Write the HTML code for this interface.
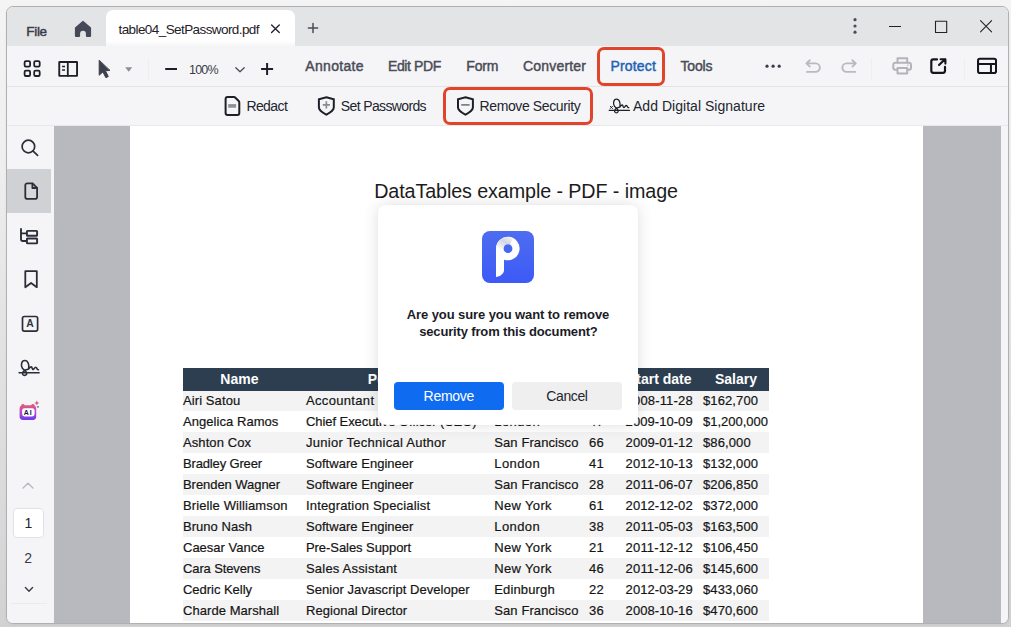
<!DOCTYPE html>
<html lang="en">
<head>
<meta charset="utf-8">
<title>PDF Editor - Remove Security</title>
<style>
*{box-sizing:border-box;margin:0;padding:0}
html,body{width:1011px;height:627px;overflow:hidden;background:linear-gradient(#f4f4f4 0,#efefef 25%,#e4e4e4 50%,#dadada 80%,#d2d2d2 100%);font-family:"Liberation Sans",sans-serif;color:#2b2d36}
.abs{position:absolute}
#shadow{position:absolute;left:6px;top:6px;width:1003px;height:618px;border-radius:7px;box-shadow:0 1px 3px rgba(0,0,0,.05)}
#win{position:absolute;left:6px;top:6px;width:1003px;height:618px;border:1px solid #b0b0b0;border-radius:7px;overflow:hidden;background:#f5f5f7}
#inner{position:absolute;left:-7px;top:-7px;width:1011px;height:627px}
#titlebar{left:7px;top:7px;width:1001px;height:39px;background:#e3e4e6}
#tab{left:106px;top:10px;width:189px;height:36px;background:linear-gradient(#fff 0,#fff 85%,#f6f6f8 100%);border-radius:7px 7px 0 0}
.t{position:absolute;white-space:nowrap;line-height:1}
#row1{left:7px;top:46px;width:1001px;height:41px;background:#f5f5f7;border-bottom:1px solid #e3e3e7}
#row2{left:7px;top:87px;width:1001px;height:39px;background:#f5f5f7;border-bottom:1px solid #e8e8eb}
#side{left:7px;top:126px;width:47px;height:497px;background:#f5f5f7}
#sidesel{left:7px;top:169px;width:44px;height:44px;background:#d0d1d4}
#gray{left:54px;top:126px;width:947px;height:497px;background:#b7b9be}
#page{left:130px;top:126px;width:793px;height:497px;background:#fff}
#rstrip{left:1001px;top:126px;width:7px;height:497px;background:#f5f5f7}
.redbox{position:absolute;border:3.6px solid #e0442a;border-radius:7px}
#icons{position:absolute;left:0;top:0;width:1011px;height:627px;overflow:visible}
.vsep{position:absolute;width:1px;background:#eeeef1}
#pgbox{left:13px;top:508px;width:31px;height:30px;background:#fff;border:1px solid #e2e2e6;border-radius:4px}
.dt{-webkit-text-stroke:0.2px}
.hdr{position:absolute;background:#2c3e50}
.stripe{position:absolute;left:183px;width:586px;background:#f3f3f3}
#dlg{position:absolute;left:378px;top:205px;width:260px;height:219.6px;background:linear-gradient(#fff 0,#fff 99.3%,rgba(255,255,255,.8) 100%);border-radius:8px;box-shadow:0 0 16px rgba(0,0,0,.13),0 0 2px rgba(0,0,0,.04)}
#appicon{position:absolute;left:104px;top:26px;width:52px;height:52px}
.btn{position:absolute;top:177px;height:28px;border-radius:4px;border:0;padding:0;margin:0;font-family:inherit;display:block}
#btn-remove{left:16px;width:110px;background:#0f6cf0}
#btn-cancel{left:134px;width:110px;background:#efeff0}
</style>
</head>
<body>
<div id="shadow"></div>
<div id="win"><div id="inner">
  <div id="titlebar" class="abs"></div>
  <div id="tab" class="abs"></div>
  <div id="row1" class="abs"></div>
  <div id="row2" class="abs"></div>
  <div id="side" class="abs"></div>
  <div id="sidesel" class="abs"></div>
  <div id="gray" class="abs"></div>
  <div id="page" class="abs">
  </div>
<div class="t" style="left:374.2px;top:181.8px;font-size:19.7px;color:#1c1c1c;letter-spacing:-0.083px;">DataTables example - PDF - image</div>
<div class="stripe" style="top:390.0px;height:20.97px"></div>
<div class="t dt" style="left:183.0px;top:393.9px;font-size:13px;color:#151515;letter-spacing:0.091px;">Airi Satou</div>
<div class="t dt" style="left:306.0px;top:393.9px;font-size:13px;color:#151515;letter-spacing:0.334px;">Accountant</div>
<div class="t dt" style="left:494.3px;top:393.9px;font-size:13px;color:#151515;letter-spacing:0.779px;">Tokyo</div>
<div class="t dt" style="left:589.1px;top:393.9px;font-size:13px;color:#151515;letter-spacing:0.286px;">33</div>
<div class="t dt" style="left:625.6px;top:393.9px;font-size:13px;color:#151515;letter-spacing:0.166px;">2008-11-28</div>
<div class="t dt" style="left:703.0px;top:393.9px;font-size:13px;color:#151515;letter-spacing:0.109px;">$162,700</div>
<div class="t dt" style="left:183.0px;top:414.9px;font-size:13px;color:#151515;letter-spacing:0.054px;">Angelica Ramos</div>
<div class="t dt" style="left:306.0px;top:414.9px;font-size:13px;color:#151515;letter-spacing:-0.067px;">Chief Executive Officer (CEO)</div>
<div class="t dt" style="left:494.3px;top:414.9px;font-size:13px;color:#151515;letter-spacing:0.391px;">London</div>
<div class="t dt" style="left:589.1px;top:414.9px;font-size:13px;color:#151515;letter-spacing:0.286px;">47</div>
<div class="t dt" style="left:625.6px;top:414.9px;font-size:13px;color:#151515;letter-spacing:0.059px;">2009-10-09</div>
<div class="t dt" style="left:703.0px;top:414.9px;font-size:13px;color:#151515;letter-spacing:-0.014px;">$1,200,000</div>
<div class="stripe" style="top:431.9px;height:20.97px"></div>
<div class="t dt" style="left:183.0px;top:435.8px;font-size:13px;color:#151515;letter-spacing:0.086px;">Ashton Cox</div>
<div class="t dt" style="left:306.0px;top:435.8px;font-size:13px;color:#151515;letter-spacing:0.261px;">Junior Technical Author</div>
<div class="t dt" style="left:494.3px;top:435.8px;font-size:13px;color:#151515;letter-spacing:0.084px;">San Francisco</div>
<div class="t dt" style="left:589.1px;top:435.8px;font-size:13px;color:#151515;letter-spacing:0.286px;">66</div>
<div class="t dt" style="left:625.6px;top:435.8px;font-size:13px;color:#151515;letter-spacing:0.059px;">2009-01-12</div>
<div class="t dt" style="left:703.0px;top:435.8px;font-size:13px;color:#151515;letter-spacing:0.104px;">$86,000</div>
<div class="t dt" style="left:183.0px;top:456.8px;font-size:13px;color:#151515;letter-spacing:-0.151px;">Bradley Greer</div>
<div class="t dt" style="left:306.0px;top:456.8px;font-size:13px;color:#151515;letter-spacing:0.031px;">Software Engineer</div>
<div class="t dt" style="left:494.3px;top:456.8px;font-size:13px;color:#151515;letter-spacing:0.391px;">London</div>
<div class="t dt" style="left:589.1px;top:456.8px;font-size:13px;color:#151515;letter-spacing:0.286px;">41</div>
<div class="t dt" style="left:625.6px;top:456.8px;font-size:13px;color:#151515;letter-spacing:0.059px;">2012-10-13</div>
<div class="t dt" style="left:703.0px;top:456.8px;font-size:13px;color:#151515;letter-spacing:0.109px;">$132,000</div>
<div class="stripe" style="top:473.9px;height:20.97px"></div>
<div class="t dt" style="left:183.0px;top:477.8px;font-size:13px;color:#151515;letter-spacing:-0.056px;">Brenden Wagner</div>
<div class="t dt" style="left:306.0px;top:477.8px;font-size:13px;color:#151515;letter-spacing:0.031px;">Software Engineer</div>
<div class="t dt" style="left:494.3px;top:477.8px;font-size:13px;color:#151515;letter-spacing:0.084px;">San Francisco</div>
<div class="t dt" style="left:589.1px;top:477.8px;font-size:13px;color:#151515;letter-spacing:0.286px;">28</div>
<div class="t dt" style="left:625.6px;top:477.8px;font-size:13px;color:#151515;letter-spacing:0.166px;">2011-06-07</div>
<div class="t dt" style="left:703.0px;top:477.8px;font-size:13px;color:#151515;letter-spacing:0.109px;">$206,850</div>
<div class="t dt" style="left:183.0px;top:498.7px;font-size:13px;color:#151515;letter-spacing:0.112px;">Brielle Williamson</div>
<div class="t dt" style="left:306.0px;top:498.7px;font-size:13px;color:#151515;letter-spacing:0.159px;">Integration Specialist</div>
<div class="t dt" style="left:494.3px;top:498.7px;font-size:13px;color:#151515;letter-spacing:0.341px;">New York</div>
<div class="t dt" style="left:589.1px;top:498.7px;font-size:13px;color:#151515;letter-spacing:0.286px;">61</div>
<div class="t dt" style="left:625.6px;top:498.7px;font-size:13px;color:#151515;letter-spacing:0.059px;">2012-12-02</div>
<div class="t dt" style="left:703.0px;top:498.7px;font-size:13px;color:#151515;letter-spacing:0.109px;">$372,000</div>
<div class="stripe" style="top:515.8px;height:20.97px"></div>
<div class="t dt" style="left:183.0px;top:519.7px;font-size:13px;color:#151515;letter-spacing:0.032px;">Bruno Nash</div>
<div class="t dt" style="left:306.0px;top:519.7px;font-size:13px;color:#151515;letter-spacing:0.031px;">Software Engineer</div>
<div class="t dt" style="left:494.3px;top:519.7px;font-size:13px;color:#151515;letter-spacing:0.391px;">London</div>
<div class="t dt" style="left:589.1px;top:519.7px;font-size:13px;color:#151515;letter-spacing:0.286px;">38</div>
<div class="t dt" style="left:625.6px;top:519.7px;font-size:13px;color:#151515;letter-spacing:0.166px;">2011-05-03</div>
<div class="t dt" style="left:703.0px;top:519.7px;font-size:13px;color:#151515;letter-spacing:0.109px;">$163,500</div>
<div class="t dt" style="left:183.0px;top:540.7px;font-size:13px;color:#151515;">Caesar Vance</div>
<div class="t dt" style="left:306.0px;top:540.7px;font-size:13px;color:#151515;letter-spacing:-0.065px;">Pre-Sales Support</div>
<div class="t dt" style="left:494.3px;top:540.7px;font-size:13px;color:#151515;letter-spacing:0.341px;">New York</div>
<div class="t dt" style="left:589.1px;top:540.7px;font-size:13px;color:#151515;letter-spacing:0.286px;">21</div>
<div class="t dt" style="left:625.6px;top:540.7px;font-size:13px;color:#151515;letter-spacing:0.166px;">2011-12-12</div>
<div class="t dt" style="left:703.0px;top:540.7px;font-size:13px;color:#151515;letter-spacing:0.109px;">$106,450</div>
<div class="stripe" style="top:557.8px;height:20.97px"></div>
<div class="t dt" style="left:183.0px;top:561.7px;font-size:13px;color:#151515;letter-spacing:-0.116px;">Cara Stevens</div>
<div class="t dt" style="left:306.0px;top:561.7px;font-size:13px;color:#151515;letter-spacing:0.197px;">Sales Assistant</div>
<div class="t dt" style="left:494.3px;top:561.7px;font-size:13px;color:#151515;letter-spacing:0.341px;">New York</div>
<div class="t dt" style="left:589.1px;top:561.7px;font-size:13px;color:#151515;letter-spacing:0.286px;">46</div>
<div class="t dt" style="left:625.6px;top:561.7px;font-size:13px;color:#151515;letter-spacing:0.166px;">2011-12-06</div>
<div class="t dt" style="left:703.0px;top:561.7px;font-size:13px;color:#151515;letter-spacing:0.109px;">$145,600</div>
<div class="t dt" style="left:183.0px;top:582.6px;font-size:13px;color:#151515;letter-spacing:-0.029px;">Cedric Kelly</div>
<div class="t dt" style="left:306.0px;top:582.6px;font-size:13px;color:#151515;letter-spacing:0.037px;">Senior Javascript Developer</div>
<div class="t dt" style="left:494.3px;top:582.6px;font-size:13px;color:#151515;letter-spacing:0.134px;">Edinburgh</div>
<div class="t dt" style="left:589.1px;top:582.6px;font-size:13px;color:#151515;letter-spacing:0.286px;">22</div>
<div class="t dt" style="left:625.6px;top:582.6px;font-size:13px;color:#151515;letter-spacing:0.059px;">2012-03-29</div>
<div class="t dt" style="left:703.0px;top:582.6px;font-size:13px;color:#151515;letter-spacing:0.109px;">$433,060</div>
<div class="stripe" style="top:599.7px;height:20.97px"></div>
<div class="t dt" style="left:183.0px;top:603.6px;font-size:13px;color:#151515;letter-spacing:0.055px;">Charde Marshall</div>
<div class="t dt" style="left:306.0px;top:603.6px;font-size:13px;color:#151515;letter-spacing:0.035px;">Regional Director</div>
<div class="t dt" style="left:494.3px;top:603.6px;font-size:13px;color:#151515;letter-spacing:0.084px;">San Francisco</div>
<div class="t dt" style="left:589.1px;top:603.6px;font-size:13px;color:#151515;letter-spacing:0.286px;">36</div>
<div class="t dt" style="left:625.6px;top:603.6px;font-size:13px;color:#151515;letter-spacing:0.059px;">2008-10-16</div>
<div class="t dt" style="left:703.0px;top:603.6px;font-size:13px;color:#151515;letter-spacing:0.109px;">$470,600</div>
<div class="hdr" style="left:183px;top:368px;width:586px;height:22.7px"></div>
<div class="t" style="left:220.3px;top:371.7px;font-size:14px;color:#fff;font-weight:bold;">Name</div>
<div class="t" style="left:367.8px;top:371.7px;font-size:14px;color:#fff;font-weight:bold;">Position</div>
<div class="t" style="left:517.2px;top:371.7px;font-size:14px;color:#fff;font-weight:bold;">Office</div>
<div class="t" style="left:589.3px;top:371.7px;font-size:14px;color:#fff;font-weight:bold;">Age</div>
<div class="t" style="left:627.0px;top:371.7px;font-size:14px;color:#fff;font-weight:bold;">Start date</div>
<div class="t" style="left:715.0px;top:371.7px;font-size:14px;color:#fff;font-weight:bold;">Salary</div>
<div class="t" style="left:26.3px;top:25.1px;font-size:13.5px;color:#3a3c47;-webkit-text-stroke:0.45px;letter-spacing:-0.318px;">File</div>
<div class="t" style="left:118.5px;top:22.6px;font-size:13.5px;color:#1f2128;letter-spacing:-0.584px;">table04_SetPassword.pdf</div>
<div class="t" style="left:189.0px;top:64.4px;font-size:12.5px;color:#3a3c47;letter-spacing:-0.790px;">100%</div>
<div class="t" style="left:305.3px;top:59.2px;font-size:14px;color:#4a4c57;-webkit-text-stroke:0.45px;letter-spacing:0.322px;">Annotate</div>
<div class="t" style="left:388.0px;top:59.2px;font-size:14px;color:#4a4c57;-webkit-text-stroke:0.45px;letter-spacing:-0.402px;">Edit PDF</div>
<div class="t" style="left:466.3px;top:59.2px;font-size:14px;color:#4a4c57;-webkit-text-stroke:0.45px;letter-spacing:-0.154px;">Form</div>
<div class="t" style="left:523.0px;top:59.2px;font-size:14px;color:#4a4c57;-webkit-text-stroke:0.45px;letter-spacing:0.191px;">Converter</div>
<div class="t" style="left:610.4px;top:59.2px;font-size:14px;color:#1e62b4;-webkit-text-stroke:0.45px;letter-spacing:0.175px;">Protect</div>
<div class="t" style="left:680.4px;top:59.2px;font-size:14px;color:#4a4c57;-webkit-text-stroke:0.45px;letter-spacing:-0.121px;">Tools</div>
<div class="t" style="left:246.4px;top:99.1px;font-size:14px;color:#23252e;letter-spacing:-0.592px;">Redact</div>
<div class="t" style="left:340.8px;top:99.1px;font-size:14px;color:#23252e;letter-spacing:-0.631px;">Set Passwords</div>
<div class="t" style="left:479.6px;top:99.1px;font-size:14px;color:#23252e;letter-spacing:-0.392px;">Remove Security</div>
<div class="t" style="left:633.0px;top:99.1px;font-size:14px;color:#23252e;letter-spacing:0.029px;">Add Digital Signature</div>
<div class="redbox" style="left:597.1px;top:47px;width:68.1px;height:39.3px"></div>
<div class="redbox" style="left:443.1px;top:87.1px;width:150px;height:37.7px"></div>
<div class="vsep" style="left:148px;top:58px;height:22px"></div>
<div class="vsep" style="left:871px;top:58px;height:22px"></div>
<div class="vsep" style="left:964px;top:58px;height:22px"></div>
<div id="pgbox" class="abs"></div>
<div class="t" style="left:24.6px;top:515.9px;font-size:14px;color:#23252e;">1</div>
<div class="t" style="left:24.2px;top:550.9px;font-size:14px;color:#3a3c47;">2</div>
<div class="abs" style="left:11px;top:603px;width:36px;height:1px;background:#ebebee"></div>
<div id="rstrip" class="abs"></div>
<svg id="icons" viewBox="0 0 1011 627" fill="none" stroke-linecap="round" stroke-linejoin="round">
<path d="M83 22 L76 28 V36 H79 V33.6 A4 4 0 0 1 87 33.6 V36 H90 V28 Z" fill="#464958" stroke="#464958" stroke-width="2.2"/>
<path d="M271.6 24.9 L279.3 32.6 M279.3 24.9 L271.6 32.6" stroke="#23252e" stroke-width="1.35"/>
<path d="M308.4 28 H317.6 M313 23.4 V32.6" stroke="#4a4c57" stroke-width="1.5"/>
<circle cx="855" cy="19.7" r="1.6" fill="#4a4c57"/>
<circle cx="855" cy="26" r="1.6" fill="#4a4c57"/>
<circle cx="855" cy="32.2" r="1.6" fill="#4a4c57"/>
<path d="M889 26.5 H901" stroke="#222" stroke-width="1.1" stroke-linecap="butt"/>
<rect x="935.5" y="21.3" width="11.2" height="11.2" stroke="#222" stroke-width="1.1"/>
<path d="M980.5 20.7 L991.6 31.8 M991.6 20.7 L980.5 31.8" stroke="#222" stroke-width="1.1"/>
<rect x="24.6" y="61.2" width="5.5" height="5.4" rx="1.3" stroke="#1e2029" stroke-width="1.8"/>
<rect x="34.2" y="61.2" width="5.5" height="5.4" rx="1.3" stroke="#1e2029" stroke-width="1.8"/>
<rect x="24.6" y="70.6" width="5.5" height="5.4" rx="1.3" stroke="#1e2029" stroke-width="1.8"/>
<rect x="34.2" y="70.6" width="5.5" height="5.4" rx="1.3" stroke="#1e2029" stroke-width="1.8"/>
<rect x="59.25" y="62.05" width="17.8" height="13.8" rx="0.3" stroke="#1e2029" stroke-width="1.9" stroke-linejoin="miter"/>
<path d="M67.8 62.05 V75.85" stroke="#1e2029" stroke-width="1.8"/>
<path d="M62.1 66.4 H65 M62.1 70.1 H65" stroke="#1e2029" stroke-width="1.5" stroke-linecap="butt"/>
<path d="M99.2 60.6 L99.2 75.2 L102.9 71.9 L105.9 77.7 L108.3 76.5 L105.4 70.8 L109.6 70.4 Z" fill="#3c3f4c" stroke="#3c3f4c" stroke-width="1"/>
<path d="M125.2 67.2 H132.2 L128.7 71.8 Z" fill="#8c8e96" stroke="none"/>
<path d="M165.2 69 H177" stroke="#1e2029" stroke-width="2" stroke-linecap="butt"/>
<path d="M235.8 67.8 L240 71.8 L244.2 67.8" stroke="#4a4c57" stroke-width="1.3"/>
<path d="M261.1 69 H273.1 M267.1 63 V75" stroke="#1e2029" stroke-width="2" stroke-linecap="butt"/>
<circle cx="767" cy="66.2" r="1.6" fill="#3a3c47"/>
<circle cx="773.1" cy="66.2" r="1.6" fill="#3a3c47"/>
<circle cx="779.2" cy="66.2" r="1.6" fill="#3a3c47"/>
<path d="M809.8 60.2 L806.4 63.4 L809.8 66.6 M806.8 63.4 H815.6 A4.25 4.25 0 0 1 815.6 71.9 H807" stroke="#b9babf" stroke-width="1.9"/>
<path d="M852.4 60.2 L855.8 63.4 L852.4 66.6 M855.4 63.4 H846.6 A4.25 4.25 0 0 0 846.6 71.9 H855.2" stroke="#b9babf" stroke-width="1.9"/>
<path d="M897.5 62.6 V58.3 H907.2 V62.6" stroke="#b3b4b9" stroke-width="2"/>
<path d="M897 69.8 H895.3 A2 2 0 0 1 893.3 67.8 V64.7 A2 2 0 0 1 895.3 62.7 H909 A2 2 0 0 1 911 64.7 V67.8 A2 2 0 0 1 909 69.8 H907.6" stroke="#b3b4b9" stroke-width="2"/>
<rect x="897.5" y="67.9" width="9.7" height="5.5" stroke="#b3b4b9" stroke-width="2"/>
<circle cx="907.9" cy="65.2" r="0.8" fill="#b3b4b9"/>
<path d="M937 59.4 H933.3 A2 2 0 0 0 931.3 61.4 V70.8 A2 2 0 0 0 933.3 72.8 H943 A2 2 0 0 0 945 70.8 V66.8" stroke="#14161e" stroke-width="2.2"/>
<path d="M939 65 L945 59.2 M940.6 59.2 H945.4 V63.6" stroke="#14161e" stroke-width="2.1"/>
<rect x="978.05" y="58.8" width="17.95" height="14.2" rx="1.8" stroke="#14161e" stroke-width="2.05"/>
<path d="M978.05 63.9 H996 M990.95 63.9 V73" stroke="#14161e" stroke-width="2"/>
<path d="M227.6 97.1 H234 Q234.8 97.1 235.4 97.7 L238.7 101 Q239.3 101.6 239.3 102.4 V112.9 A2 2 0 0 1 237.3 114.9 H227.6 A2 2 0 0 1 225.6 112.9 V99.1 A2 2 0 0 1 227.6 97.1 Z" stroke="#1e2029" stroke-width="2"/>
<rect x="228.2" y="104.1" width="7.9" height="3.6" fill="#8e8f97" stroke="none"/>
<path d="M326.35 97.2 L333.8 99.2 V107.5 C333.8 110.7 329.85 112.80000000000001 326.35 114.7 C322.85 112.80000000000001 318.90000000000003 110.7 318.90000000000003 107.5 V99.2 Z" stroke="#1e2029" stroke-width="2" stroke-linejoin="miter"/><path d="M322.75 104.9 H329.95000000000005 M326.35 101.30000000000001 V108.5" stroke="#8a8b93" stroke-width="1.7" stroke-linecap="butt"/>
<path d="M465.45 97.2 L472.9 99.2 V107.5 C472.9 110.7 468.95 112.80000000000001 465.45 114.7 C461.95 112.80000000000001 458.0 110.7 458.0 107.5 V99.2 Z" stroke="#1e2029" stroke-width="2" stroke-linejoin="miter"/><path d="M461.25 104.9 H469.65" stroke="#7e7f87" stroke-width="1.7" stroke-linecap="butt"/>
<path d="M609.2 110.3 H629.5 M619.9 107.0 C620.6 103.5 619.6 99.2 616.5 99.2 C613.4 99.2 612.8 103.8 614.4 106.2 C615.4 107.8 617.9 108.6 618.2 110.6 C618.5 112.5 616.6 113.2 615.3 112.5 C613.8 111.6 614.6 109.0 617.0 108.0 C618.2 107.5 619.2 107.3 619.9 107.0 C620.6 106.2 621.4 104.8 622.3 105.0 C623.2 105.2 623.0 107.5 623.8 107.5 C624.6 107.5 625.4 105.3 626.3 105.5 C627.2 105.5 627.2 107.0 628.0 107.5 L628.7 107.6" stroke="#1e2029" stroke-width="1.3"/>
<path d="M610.3 106.3 L612.5 108.5 M612.5 106.3 L610.3 108.5" stroke="#1e2029" stroke-width="1"/>
<circle cx="28.4" cy="146.5" r="6.3" stroke="#2b2d38" stroke-width="1.7"/>
<path d="M33.1 151.2 L37.6 155.4" stroke="#2b2d38" stroke-width="1.7"/>
<path d="M27.2 183.3 H32.6 L37.1 187.8 V196.9 A1.9 1.9 0 0 1 35.2 198.8 H27.2 A1.9 1.9 0 0 1 25.3 196.9 V185.2 A1.9 1.9 0 0 1 27.2 183.3 Z" fill="#d7d8dd" stroke="#2b2d38" stroke-width="1.8"/>
<path d="M32.4 183.6 V188 H36.8" stroke="#2b2d38" stroke-width="1.8"/>
<path d="M21 228.9 V239.6 Q21 241 22.4 241 H26.6 M21 233.4 H26.6" stroke="#2b2d38" stroke-width="1.9"/>
<rect x="26.9" y="230.9" width="10.2" height="4.9" rx="0.6" stroke="#2b2d38" stroke-width="1.9"/>
<rect x="26.9" y="238.5" width="10.2" height="4.9" rx="0.6" stroke="#2b2d38" stroke-width="1.9"/>
<path d="M25.3 271.2 H36.8 V287.2 L31.05 283 L25.3 287.2 Z" stroke="#2b2d38" stroke-width="1.8"/>
<rect x="22.5" y="316.5" width="15.1" height="14.6" rx="1.8" stroke="#2b2d38" stroke-width="1.7"/>
<path d="M19.1 372.7 H39.1 M28.6 369.0 C29.4 365.2 28.2 360.5 24.8 360.5 C21.3 360.5 20.6 365.6 22.4 368.2 C23.5 369.8 26.3 370.8 26.7 373.0 C27.0 375.0 24.9 375.9 23.4 375.1 C21.7 374.1 22.6 371.3 25.3 370.1 C26.7 369.5 27.8 369.4 28.6 369.0 C29.4 368.2 30.3 366.6 31.3 366.9 C32.3 367.1 32.1 369.6 32.9 369.6 C33.8 369.6 34.7 367.2 35.7 367.3 C36.8 367.4 36.8 369.1 37.7 369.5 L38.4 369.7" stroke="#2b2d38" stroke-width="1.6"/>
<defs><linearGradient id="aig" x1="0" y1="0" x2="0" y2="1"><stop offset="0" stop-color="#e35e66"/><stop offset=".45" stop-color="#c24ac8"/><stop offset="1" stop-color="#6a3af2"/></linearGradient><linearGradient id="appg" x1="0" y1="0" x2="0" y2="1"><stop offset="0" stop-color="#4d6cf0"/><stop offset="1" stop-color="#3b59f6"/></linearGradient></defs>
<path d="M21.2 405.4 A1.8 1.8 0 0 1 24.6 405.2 H31.2 A1.8 1.8 0 0 1 34.6 405.4 A3.2 3.2 0 0 1 36.2 408.2 V416.6 A3.4 3.4 0 0 1 32.8 420 H23 A3.4 3.4 0 0 1 19.6 416.6 V408.2 A3.2 3.2 0 0 1 21.2 405.4 Z" fill="url(#aig)" stroke="none"/>
<rect x="22.1" y="408.2" width="12.5" height="8.3" rx="2.4" fill="#fff" stroke="none"/>
<path d="M36.8 400.6 Q37.1 402.8 39.3 403.1 Q37.1 403.4 36.8 405.6 Q36.5 403.4 34.3 403.1 Q36.5 402.8 36.8 400.6 Z" fill="#d8587c" stroke="none"/>
<circle cx="38" cy="406.9" r="0.8" fill="#5c3c90"/>
<path d="M23 488 L28 483.2 L33 488" stroke="#b9babf" stroke-width="1.4"/>
<path d="M25.4 587.6 L29 591.2 L32.6 587.6" stroke="#3a3c47" stroke-width="1.4"/>
</svg>
<div class="t" style="left:26.3px;top:319.0px;font-size:10.4px;color:#33353f;font-weight:bold;">A</div>
<div class="t" style="left:23.7px;top:409.1px;font-size:7px;color:#1a1450;font-weight:bold;letter-spacing:1.100px;">AI</div>
<div id="dlg" role="dialog">
<svg id="appicon" viewBox="0 0 52 52"><defs><linearGradient id="apg" x1="0" y1="0" x2="0" y2="1"><stop offset="0" stop-color="#4e6df0"/><stop offset="1" stop-color="#3c5af6"/></linearGradient><linearGradient id="apsh" x1="0.1" y1="1" x2="0.9" y2="0"><stop offset="0" stop-color="#ffffff"/><stop offset=".55" stop-color="#d3d6e2"/><stop offset="1" stop-color="#f4f5f9"/></linearGradient></defs><rect width="52" height="52" rx="8" fill="url(#apg)"/><path d="M14 17.5 A11.8 11.8 0 1 1 22 28.7 V39 C22 43 18 45.6 14 46 Z" fill="#fff"/><path d="M14.2 17.7 A11.8 11.8 0 0 1 31 7 L28 13.7 A4.5 4.5 0 0 0 21.6 17.7 Z" fill="url(#apsh)"/><circle cx="26" cy="17.7" r="4.4" fill="#4667f2"/></svg>
<div class="t" style="left:28.8px;top:102.9px;font-size:13px;color:#1a1c28;font-weight:bold;letter-spacing:-0.089px;">Are you sure you want to remove</div>
<div class="t" style="left:41.2px;top:120.0px;font-size:13px;color:#1a1c28;font-weight:bold;letter-spacing:-0.154px;">security from this document?</div>
<button id="btn-remove" class="btn" type="button"><span class="t" style="left:29.6px;top:7.1px;font-size:14px;color:#fff;letter-spacing:-0.306px;">Remove</span></button>
<button id="btn-cancel" class="btn" type="button"><span class="t" style="left:34.3px;top:7.1px;font-size:14px;color:#23252e;letter-spacing:-0.396px;">Cancel</span></button>
</div>
</div></div>
</body>
</html>
